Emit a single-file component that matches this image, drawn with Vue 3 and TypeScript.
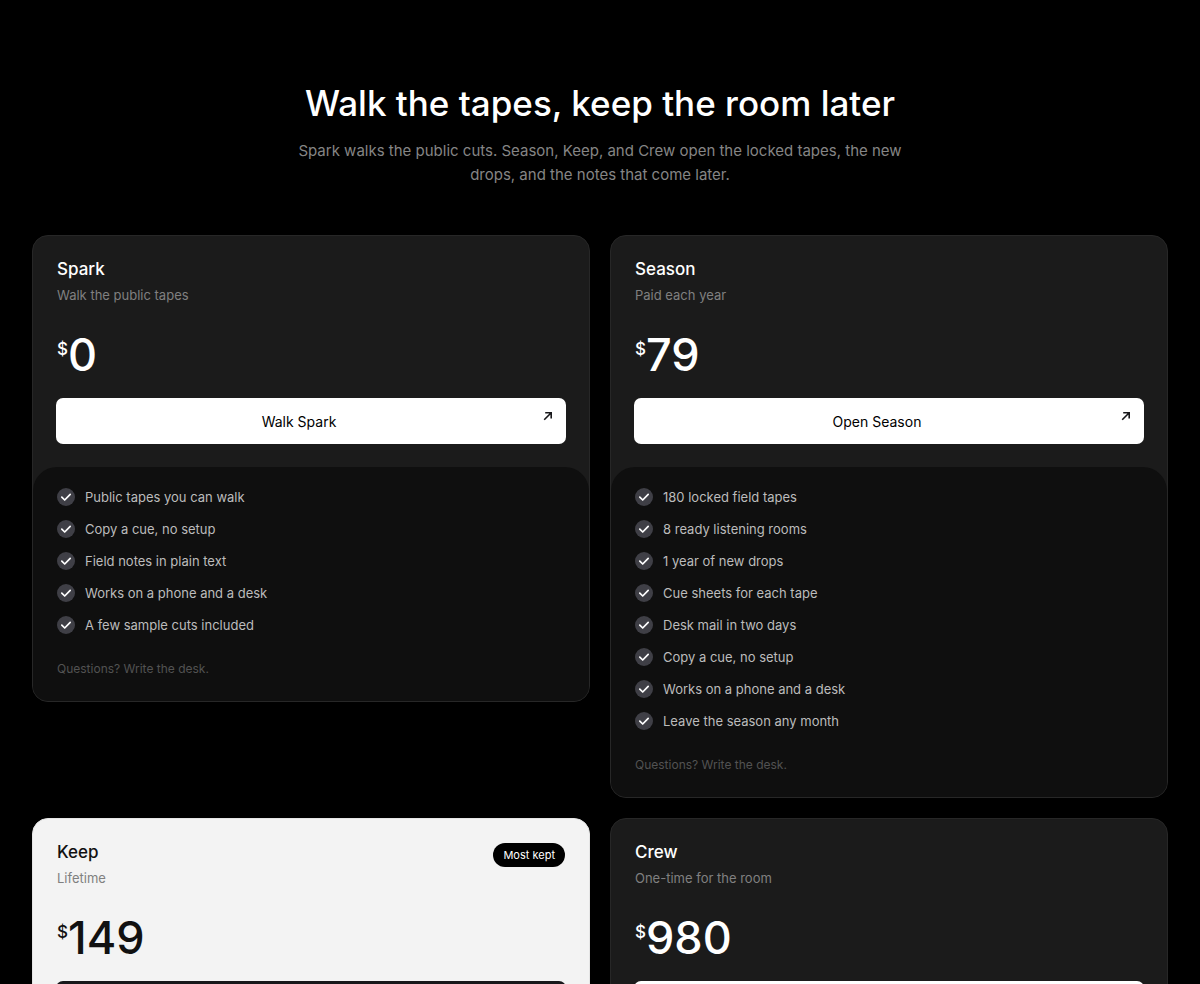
<script setup lang="ts">
interface Plan {
  id: string
  name: string
  note: string
  price: number
  action?: string
  badge?: string
  featured?: boolean
  features: string[]
}

const plans: Plan[] = [
  {
    id: 'spark',
    name: 'Spark',
    note: 'Walk the public tapes',
    price: 0,
    action: 'Walk Spark',
    features: [
      'Public tapes you can walk',
      'Copy a cue, no setup',
      'Field notes in plain text',
      'Works on a phone and a desk',
      'A few sample cuts included',
    ],
  },
  {
    id: 'season',
    name: 'Season',
    note: 'Paid each year',
    price: 79,
    action: 'Open Season',
    features: [
      '180 locked field tapes',
      '8 ready listening rooms',
      '1 year of new drops',
      'Cue sheets for each tape',
      'Desk mail in two days',
      'Copy a cue, no setup',
      'Works on a phone and a desk',
      'Leave the season any month',
    ],
  },
  {
    id: 'keep',
    name: 'Keep',
    note: 'Lifetime',
    price: 149,
    badge: 'Most kept',
    featured: true,
    features: [],
  },
  {
    id: 'crew',
    name: 'Crew',
    note: 'One-time for the room',
    price: 980,
    features: [],
  },
]
</script>

<template>
  <main class="page">
    <header class="intro">
      <h1>Walk the tapes, keep the room later</h1>
      <p>Spark walks the public cuts. Season, Keep, and Crew open the locked tapes, the new drops, and the notes that come later.</p>
    </header>

    <section class="plans">
      <article v-for="plan in plans" :key="plan.id" class="card" :class="{ featured: plan.featured }">
        <div class="offer">
          <div class="heading">
            <div>
              <h2 :id="`${plan.id}-name`">{{ plan.name }}</h2>
              <p class="note">{{ plan.note }}</p>
            </div>
            <span v-if="plan.badge" class="badge">{{ plan.badge }}</span>
          </div>
          <p class="price"><span class="currency">$</span><span class="amount">{{ plan.price }}</span></p>
          <button type="button" class="action" :aria-labelledby="plan.action ? undefined : `${plan.id}-name`">
            {{ plan.action }}
            <svg class="arrow" viewBox="0 0 10 10" aria-hidden="true">
              <path d="M1.2 8.8 8.2 1.8M2.2 1.8H8.2V7.6" />
            </svg>
          </button>
        </div>
        <div v-if="plan.features.length" class="details">
          <ul>
            <li v-for="feature in plan.features" :key="feature">
              <svg class="check" viewBox="0 0 18 18" aria-hidden="true">
                <circle cx="9" cy="9" r="9" />
                <path d="M4.8 9.2 7.7 12 13.2 6.3" />
              </svg>
              {{ feature }}
            </li>
          </ul>
          <p class="questions">Questions? Write the desk.</p>
        </div>
      </article>
    </section>
  </main>
</template>

<style>
body {
  margin: 0;
  background: #000;
}
</style>

<style scoped>
.page {
  box-sizing: border-box;
  height: 100vh;
  overflow: hidden;
  padding: 75px 32px 0;
  background: #000;
  color: #fff;
  font-family: Inter, "Liberation Sans", sans-serif;
}

h1,
h2,
p,
ul {
  margin: 0;
  padding: 0;
}

.intro {
  max-width: 640px;
  margin: 0 auto 48px;
  text-align: center;
}

h1 {
  font-size: 35px;
  line-height: 56px;
  font-weight: 500;
}

.intro p {
  margin-top: 8px;
  font-size: 15px;
  line-height: 24px;
  color: #858585;
}

.plans {
  display: grid;
  grid-template-columns: repeat(2, minmax(0, 1fr));
  align-items: start;
  gap: 20px;
}

.card {
  overflow: hidden;
  border: 1px solid #272727;
  border-radius: 16px;
  background: #1b1b1b;
}

.offer {
  padding: 20px 24px 24px;
}

.heading {
  display: flex;
  justify-content: space-between;
  align-items: flex-start;
}

h2 {
  font-size: 17px;
  line-height: 26px;
  font-weight: 500;
}

.note {
  margin-top: 3px;
  font-size: 13px;
  line-height: 20px;
  color: #808080;
}

.badge {
  margin-top: 4px;
  padding: 0 10px;
  border-radius: 12px;
  background: #000;
  color: #fff;
  font-size: 11px;
  line-height: 24px;
}

.price {
  display: flex;
  align-items: flex-start;
  margin: 25px 0 19px;
  font-weight: 500;
}

.currency {
  margin-top: 7px;
  font-size: 17px;
  line-height: 24px;
}

.amount {
  font-size: 45px;
  line-height: 50px;
}

.action {
  position: relative;
  display: block;
  width: 100%;
  height: 44px;
  padding: 0 36px 0 12px;
  border: 0;
  border-radius: 6px;
  background: #fff;
  box-shadow: 0 0 0 1px #fff;
  color: #000;
  font: inherit;
  font-size: 14px;
}

.arrow {
  position: absolute;
  top: 12px;
  right: 12px;
  width: 10px;
  height: 10px;
  fill: none;
  stroke: #18181b;
  stroke-width: 1.6;
}

.details {
  padding: 18px 24px 22px;
  border-radius: 24px 24px 0 0;
  background: #0f0f0f;
}

ul {
  display: grid;
  gap: 8px;
  list-style: none;
}

li {
  display: flex;
  align-items: center;
  gap: 10px;
  font-size: 13px;
  line-height: 24px;
  color: #bcbcbc;
}

.check {
  width: 18px;
  height: 18px;
  fill: #3f3f46;
}

.check path {
  fill: none;
  stroke: #fff;
  stroke-width: 1.7;
  stroke-linecap: round;
  stroke-linejoin: round;
}

.questions {
  margin-top: 22px;
  font-size: 12px;
  line-height: 20px;
  color: #525252;
}

.featured {
  border-color: #e5e5e5;
  background: #f3f3f3;
  color: #111;
}

.featured .action {
  background: #18181b;
  box-shadow: 0 0 0 1px #18181b;
  color: #fff;
}

.featured .arrow {
  stroke: #fff;
}
</style>
